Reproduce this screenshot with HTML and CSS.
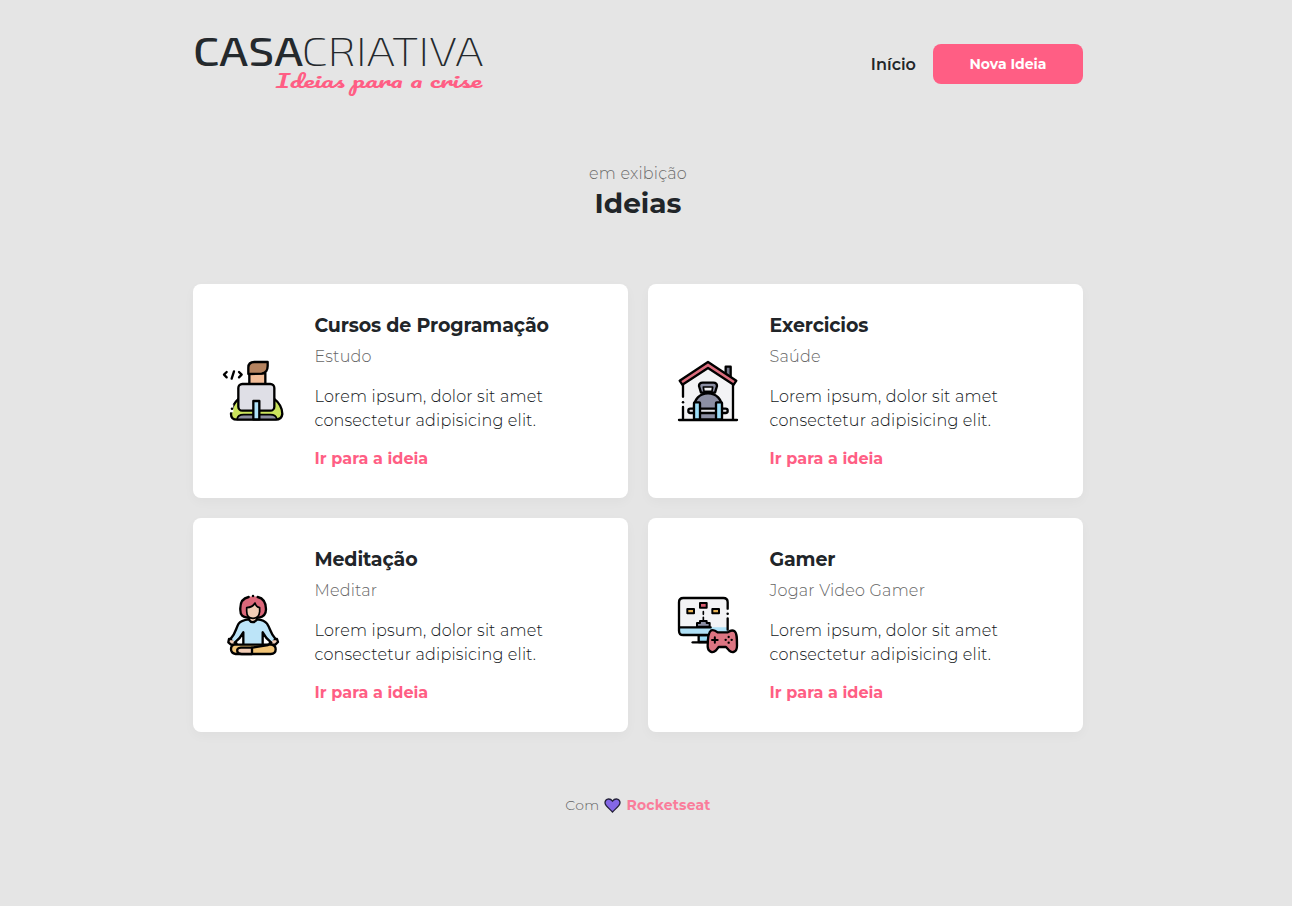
FILE: index.html
```html
<!DOCTYPE html>
<html lang="pt-br">
<head>
<meta charset="utf-8">
<title>Casa Criativa</title>
<link rel="stylesheet" href="styles.css">
</head>
<body>
<div class="container">
  <header class="header">
    <svg class="logo" viewBox="0 0 290 64" role="img" aria-label="Casa Criativa">
      <text class="logo-bold" x="0" y="34" textLength="110" lengthAdjust="spacingAndGlyphs">CASA</text>
      <text class="logo-thin" x="108.500" y="34" textLength="182" lengthAdjust="spacingAndGlyphs">CRIATIVA</text>
      <text class="logo-script" x="83" y="56" textLength="206" lengthAdjust="spacingAndGlyphs">Ideias para a crise</text>
    </svg>
    <nav class="nav">
      <a class="nav-link">Início</a>
      <a class="button">Nova Ideia</a>
    </nav>
  </header>

  <section class="heading">
    <p class="heading-sub">em exibição</p>
    <h1 class="heading-title">Ideias</h1>
  </section>

  <main class="ideas">
    <article class="card">
      <svg class="icon" viewBox="24 33 180 180">
        <path d="M103 70h48v34h-48z" fill="#f2bd98"/>
        <path d="M100 72V53q0-17 18-17h40v12q0 20-18 23z" fill="#b5835f"/>
        <path d="M72 145q-24 22-24 47 0 17 18 17h116q18 0 20-17 0-27-26-47z" fill="#cbe35c"/>
        <path d="M66 208q2-14 20-14h80q17 0 20 14z" fill="#8c8e9f" stroke-width="5"/>
        <path d="M41 163h14v24h-14z" fill="#fff" stroke="none"/>
        <circle class="dot" cx="51" cy="176" r="3.8"/>
        <rect x="70" y="102" width="108" height="80" rx="12" fill="#dfdfe6"/>
        <path d="M115 153h18v55h-18z" fill="#afe1f8"/>
        <path d="M35 66l-8 8 8 8M57 64l-7 22M72 66l8 8-8 8" fill="none"/>
      </svg>
      <div class="content">
        <h3 class="title">Cursos de Programação</h3>
        <p class="category">Estudo</p>
        <p class="description"><span>Lorem ipsum, dolor sit amet</span> <span>consectetur adipisicing elit.</span></p>
        <a class="link">Ir para a ideia</a>
      </div>
    </article>

    <article class="card">
      <svg class="icon" viewBox="30 33 180 180">
        <path d="M45 93l75-49 75 49v116H45z" fill="#f3f3f5" stroke="none"/>
        <path d="M173 72V50h15v34z" fill="#77798c"/>
        <path d="M45 104v36M45 171v38M195 104v105M33 210h174" fill="none"/>
        <circle class="dot" cx="45" cy="157" r="3.8"/>
        <path d="M35 92l85-56 85 56-8 12-77-50-77 50z" fill="#dc6d7d"/>
        <path d="M99 128l-6-20q0-10 11-10h32q11 0 11 10l-6 20z" fill="#8c8fa3"/>
        <path d="M108 124l-2-13h28l-2 13z" fill="#f3f3f5" stroke-width="5"/>
        <path d="M92 208q-14-15-14-34c0-26 17-44 42-44s42 18 42 44q0 19-14 34z" fill="#8c8fa3"/>
        <rect x="61" y="176" width="118" height="13" rx="6" fill="#e4e4e9"/>
        <rect x="78" y="157" width="18" height="51" rx="2" fill="#9bdcf6"/>
        <rect x="144" y="157" width="18" height="51" rx="2" fill="#9bdcf6"/>
      </svg>
      <div class="content">
        <h3 class="title">Exercicios</h3>
        <p class="category">Saúde</p>
        <p class="description"><span>Lorem ipsum, dolor sit amet</span> <span>consectetur adipisicing elit.</span></p>
        <a class="link">Ir para a ideia</a>
      </div>
    </article>

    <article class="card">
      <svg class="icon" viewBox="24 30 180 180">
        <path d="M101 36c-21 4-26 23-25 39 0 17 7 21 24 22h28c18-1 25-8 25-24 0-19-7-33-25-37-9-3-19-3-27 0z" fill="#dc687a" stroke="none"/>
        <path d="M101 36c-21 4-26 23-25 39 0 17 7 21 22 23M128 36c18 4 25 18 25 37 0 16-7 23-22 25" fill="none"/>
        <circle class="dot" cx="114" cy="33" r="3.8"/>
        <path d="M102 94v15q12 9 24 0V94z" fill="#f2cdb6"/>
        <path d="M95 68q18-1 25-14 3 12 14 14v12q-2 20-20 20-19 0-19-22z" fill="#f2cdb6" stroke-width="5"/>
        <path d="M42 162l-2 10 8 7h18l-8-17zM186 162l3 9-8 8h-19l8-17z" fill="#f2cdb6"/>
        <path d="M101 103q-23 3-30 13c-9 14-8 28-23 44l13 13q14-11 23-30l2 36h57l2-36q7 18 22 30l12-13c-16-17-13-26-25-44q-8-11-27-13-10 16-26 0z" fill="#bce4f8" stroke="none"/>
        <path d="M101 103q-23 3-30 13c-9 14-8 28-23 44M59 173q16-12 26-31v36M127 103q21 2 29 13c12 18 9 27 24 44M169 173q-16-12-26-31v36M101 103q11 17 26 0" fill="none"/>
        <path d="M58 179h111q13 2 13 14 0 14-15 14H62q-14-2-14-14 0-12 10-14z" fill="#f2c477"/>
        <path d="M111 188H78q-14 1-11 12 2 7 13 7h31z" fill="#f2cdb6"/>
        <path d="M111 188l48-8" fill="none"/>
      </svg>
      <div class="content">
        <h3 class="title">Meditação</h3>
        <p class="category">Meditar</p>
        <p class="description"><span>Lorem ipsum, dolor sit amet</span> <span>consectetur adipisicing elit.</span></p>
        <a class="link">Ir para a ideia</a>
      </div>
    </article>

    <article class="card">
      <svg class="icon" viewBox="30 30 180 180">
        <path d="M92 150h30v21H92z" fill="#9bdcf6"/>
        <path d="M74 172h48" fill="none"/>
        <rect x="33" y="39" width="147" height="111" rx="13" fill="#f3f3f5" stroke="none"/>
        <path d="M33 127h147v12q-2 11-13 11H46q-12 0-13-11z" fill="#afe0f6" stroke="none"/>
        <path d="M179 71V52q0-13-13-13H46q-13 0-13 13v85q0 13 13 13h76M33 127h95M179 100v34" fill="none"/>
        <circle class="dot" cx="179" cy="86" r="3.8"/>
        <path d="M58 72h20v13H58zM133 72h20v13h-20z" fill="#eab456" stroke-width="6"/>
        <path d="M96 54h20v14H96z" fill="#d95c70" stroke-width="6"/>
        <path d="M106 80v8M106 97v7" fill="none" stroke-width="5"/>
        <path d="M87 125v-11h9v-6h20v6h9v11z" fill="#8c8fa3" stroke-width="6"/>
        <path d="M130 136q8-3 19 6h30q12-9 21-3c7 5 7 22 7 43 0 19-14 24-24 14l-9-10h-22l-9 11c-9 9-24 3-24-13 0-24 2-43 11-48z" fill="#dc7582"/>
        <path d="M132 165h17M140.500 156.500v17" fill="none" stroke-width="6"/>
        <circle class="dot" cx="182" cy="156" r="3.5"/><circle class="dot" cx="182" cy="173" r="3.5"/>
        <circle class="dot" cx="173" cy="164.500" r="3.5"/><circle class="dot" cx="191" cy="164.500" r="3.5"/>
      </svg>
      <div class="content">
        <h3 class="title">Gamer</h3>
        <p class="category">Jogar Video Gamer</p>
        <p class="description"><span>Lorem ipsum, dolor sit amet</span> <span>consectetur adipisicing elit.</span></p>
        <a class="link">Ir para a ideia</a>
      </div>
    </article>
  </main>

  <footer class="footer">
    <span class="footer-com">Com</span>
    <svg class="heart" viewBox="0 0 17 15"><path d="M8.500 14C6 11 1 8 1 4.700 1 .5 6-.3 8.500 3.200 11-.3 16 .5 16 4.700 16 8 11 11 8.500 14z"/></svg>
    <a class="footer-link">Rocketseat</a>
  </footer>
</div>
</body>
</html>
```
FILE: styles.css
```css
* {
  box-sizing: border-box;
  margin: 0;
  padding: 0;
}

body {
  background: #e5e5e5;
  color: #212529;
  font-family: Montserrat, Inter, sans-serif;
  font-size: 16px;
  line-height: 24px;
  min-height: 906px;
  padding-right: 16px;
}

.container {
  width: 890px;
  margin: 0 auto;
}

.header {
  display: flex;
  justify-content: space-between;
  align-items: center;
  height: 128px;
}

.logo {
  width: 290px;
  height: 64px;
  overflow: visible;
}

.logo text {
  fill: #24292d;
  font-family: "Exo 2", Exo, Roboto, sans-serif;
  font-size: 39.5px;
}

.logo .logo-bold { font-weight: 500; }
.logo .logo-thin { font-weight: 200; }

.logo .logo-script {
  fill: #ff5e84;
  font: 400 17px Pacifico, "Kaushan Script", "Liberation Serif", serif;
}

.nav {
  display: flex;
  align-items: center;
  gap: 17px;
}

.nav-link {
  padding-top: 1px;
  font-weight: 600;
  letter-spacing: 0.05px;
}

.button {
  width: 150px;
  height: 40px;
  border-radius: 8px;
  background: #ff5e84;
  color: #fff;
  font-size: 14px;
  font-weight: 700;
  line-height: 40px;
  text-align: center;
}

.heading {
  padding-top: 34px;
  text-align: center;
}

.heading-sub {
  color: #6c6c6c;
  font-weight: 300;
  letter-spacing: 0.2px;
}

.heading-title {
  font-size: 28px;
  font-weight: 700;
  line-height: 34px;
}

.ideas {
  display: grid;
  grid-template-columns: 1fr 1fr;
  gap: 20px;
  margin-top: 64px;
}

.card {
  display: flex;
  align-items: center;
  gap: 32px;
  height: 214px;
  padding: 30px;
  border-radius: 8px;
  background: #fff;
  box-shadow: 0 4px 12px rgba(0, 0, 0, 0.03);
}

.icon {
  flex: none;
  width: 60px;
  height: 60px;
  overflow: visible;
  stroke: #000;
  stroke-width: 7;
  stroke-linecap: round;
  stroke-linejoin: round;
}

.icon .dot {
  fill: #000;
  stroke: none;
}

.content {
  height: 154px;
  margin-left: -0.5px;
}

.title {
  font-size: 19px;
  font-weight: 700;
  letter-spacing: -0.13px;
}

.category {
  margin-top: 7px;
  color: #666;
  font-weight: 300;
  letter-spacing: 0.2px;
}

.description {
  margin-top: 16px;
  color: #111518;
  font-weight: 300;
  letter-spacing: 0.2px;
  white-space: nowrap;
}

.description span { display: block; }

.link {
  display: block;
  margin-top: 14px;
  color: #ff5e84;
  font-weight: 700;
  letter-spacing: 0.04px;
}

.footer {
  display: flex;
  justify-content: center;
  align-items: center;
  gap: 5px;
  margin-top: 61px;
  font-size: 14px;
}

.footer-com {
  color: #666;
  font-weight: 300;
  letter-spacing: 0.3px;
}

.footer-link {
  color: #fa7d9b;
  font-weight: 700;
  letter-spacing: 0.2px;
}

.heart {
  width: 17px;
  height: 15px;
  fill: #8467e6;
  stroke: #24213a;
  stroke-width: 1.3;
}
```
